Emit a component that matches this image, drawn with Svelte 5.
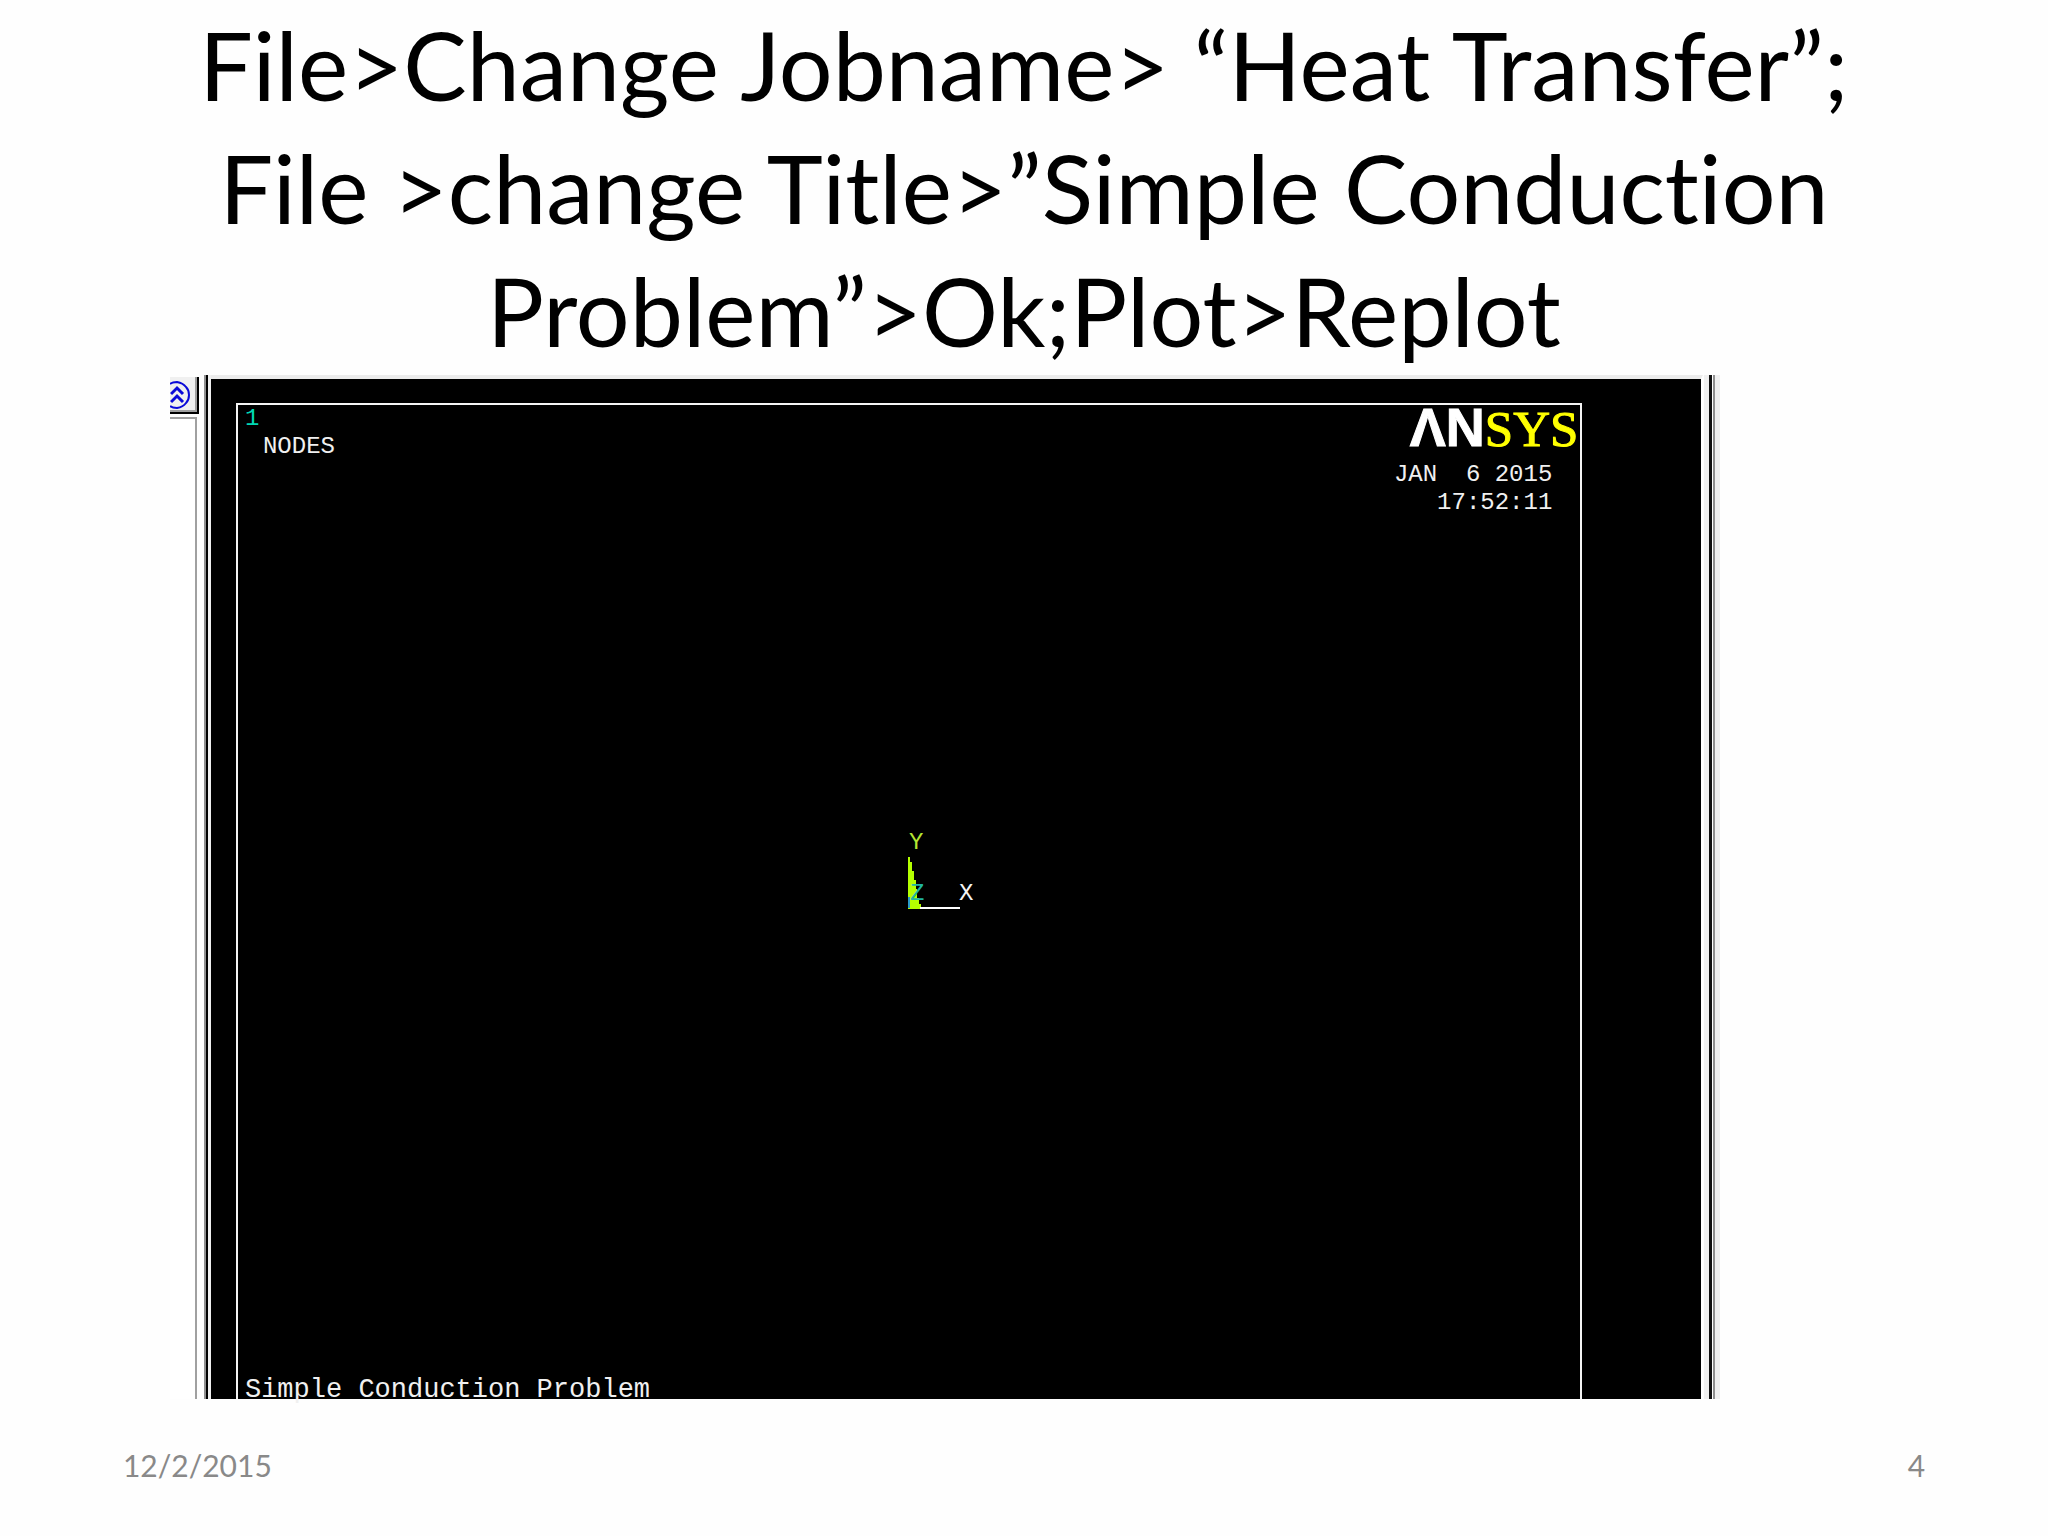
<script>
  const lines = [
    'File>Change Jobname> “Heat Transfer”;',
    'File >change Title>”Simple Conduction',
    'Problem”>Ok;Plot>Replot'
  ];
</script>

<main class="slide">
  <h1>
    {#each lines as line}
      <span>{line}</span>
    {/each}
  </h1>

  <section class="window" aria-label="ANSYS graphics window">
    <div class="side">
      <button class="collapse" aria-label="Collapse">
        <svg width="22" height="30" viewBox="0 0 22 30" fill="none" stroke="#0a0ad8" stroke-width="2">
          <path d="M0 4 Q2 2 7 2 Q13 3 16 7 Q19 10 19 15 Q19 20 16 23 Q13 27 7 28 Q2 28 0 26" />
          <path d="M1 14 L7 8 L13 14 M1 22 L7 16 L13 22" stroke-width="3" />
        </svg>
      </button>
      <div class="pane"></div>
    </div>
    <div class="splitter"></div>

    <div class="canvas">
      <div class="plot">
        <div class="top">
          <div class="labels">
            <span class="index">1</span>
            <span class="kind">NODES</span>
          </div>
          <div class="stamp">
            <div class="logo"><b>ΛN</b><span>SYS</span></div>
            <pre>JAN  6 2015
17:52:11</pre>
          </div>
        </div>
        <svg class="triad" width="140" height="160" viewBox="-70 -80 140 160">
          <g shape-rendering="crispEdges">
            <path d="M-1 -51 H1 V-46 H3 V-37 H5 V-28 H7 V-19 H8 V-10 H10 V-4 H12 V1 H-1 Z" fill="#b4ff00" />
            <path d="M-1 -11 H1 V0 H-1 Z" fill="#2a9cc8" />
            <path d="M11 -1 H51 V1 H11 Z" fill="#fff" />
          </g>
          <text x="0" y="-59" fill="#b4e632">Y</text>
          <text x="1" y="-8" fill="#20b4a0">Z</text>
          <text x="50" y="-8" fill="#f4f4f4">X</text>
        </svg>
        <p class="title">Simple Conduction Problem</p>
      </div>
    </div>
    <div class="edge"></div>
  </section>

  <footer>
    <time datetime="2015-12-02">12/2/2015</time>
    <span>4</span>
  </footer>
</main>

<style>
  :global(body) {
    margin: 0;
    background: #fff;
  }
  .slide {
    display: flex;
    flex-direction: column;
    min-height: 100vh;
    box-sizing: border-box;
    font-family: Lato, "Liberation Sans", sans-serif;
    background: #fefefe;
  }
  h1 {
    margin: 0;
    padding: 3px 0;
    font-size: 95px;
    line-height: 123px;
    font-weight: 400;
    font-variant-ligatures: none;
    text-align: center;
    color: #000;
  }
  h1 span {
    display: block;
    white-space: nowrap;
  }
  .window {
    flex: 1;
    display: flex;
    margin: 0 16% 0 8.3%;
  }
  .side {
    display: flex;
    flex-direction: column;
    gap: 3px;
    width: 29px;
    padding-top: 2px;
  }
  .collapse {
    display: flex;
    align-items: center;
    height: 37px;
    padding: 0;
    border: 0;
    border-right: 2px solid #000;
    border-bottom: 2px solid #000;
    box-shadow: inset -2px -2px #a0a0a0;
    background: #f0f0f0;
  }
  .pane {
    flex: 1;
    margin-right: 2px;
    border-top: 2px solid #a0a0a0;
    border-right: 2px solid #a0a0a0;
    background: #fff;
  }
  .splitter {
    width: 2px;
    margin-left: 5px;
    background: #000;
    border-left: 2px solid #909090;
    border-right: 3px solid #f0f0f0;
  }
  .canvas {
    flex: 1;
    display: flex;
    padding: 24px 119px 0 25px;
    background: #000;
    border-top: 4px solid #ececec;
    border-right: 2px solid #fff;
  }
  .plot {
    position: relative;
    flex: 1;
    display: flex;
    flex-direction: column;
    justify-content: space-between;
    border: 2px solid #f4f4f4;
    border-bottom: 0;
    color: #f0f0f0;
    font-family: "Liberation Mono", monospace;
    font-size: 24px;
    line-height: 28px;
  }
  .top {
    display: flex;
    justify-content: space-between;
  }
  .labels {
    display: flex;
    flex-direction: column;
    padding-left: 7px;
  }
  .index {
    color: #00d8b4;
  }
  .kind {
    padding-left: 18px;
  }
  .stamp {
    display: flex;
    flex-direction: column;
    align-items: flex-end;
  }
  .logo {
    display: flex;
    align-items: baseline;
    padding-right: 2px;
    height: 56px;
    line-height: 44px;
    font-size: 51px;
  }
  .logo b {
    font-family: "Liberation Sans", Arial, sans-serif;
    font-size: 54px;
    color: #fff;
    -webkit-text-stroke: 1px #fff;
  }
  .logo span {
    font-family: "Liberation Serif", serif;
    color: #ff0;
    -webkit-text-stroke: 1px #ff0;
  }
  pre {
    margin: 0;
    padding-right: 28px;
    font: inherit;
    text-align: right;
  }
  .triad {
    position: absolute;
    left: 50%;
    top: 50.6%;
    margin: -80px 0 0 -70px;
  }
  .title {
    margin: 0;
    padding-left: 7px;
    font-size: 27px;
    line-height: 18px;
  }
  .edge {
    width: 8px;
    margin-left: 6px;
    border-left: 3px solid #111;
    box-shadow: inset 1px 0 #fff, inset 3px 0 #909090, -5px 0 #f0f0f0;
    background: #f0f0f0;
  }
  footer {
    display: flex;
    justify-content: space-between;
    padding: 48px 6% 53px;
    font-size: 30px;
    line-height: 36px;
    color: #898989;
  }
</style>
